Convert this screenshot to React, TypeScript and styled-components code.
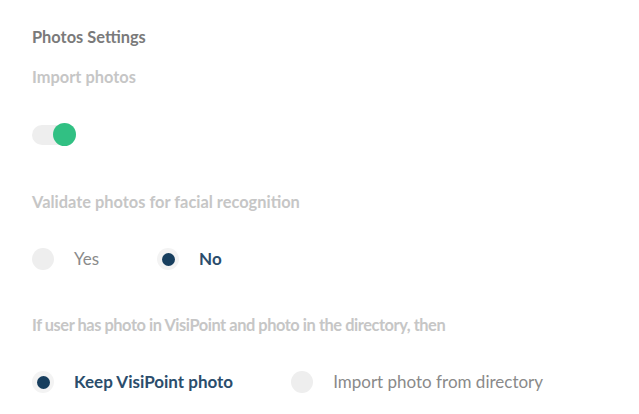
import { useState } from 'react'
import styled, { createGlobalStyle } from 'styled-components'

const GlobalStyle = createGlobalStyle`
  body {
    margin: 0;
    background: #ffffff;
    font-family: Lato, 'Open Sans', sans-serif;
  }
`

export default function App() {
  const [importPhotos, setImportPhotos] = useState(true)
  const [validate, setValidate] = useState('no')
  const [keep, setKeep] = useState('keep')

  return (
    <>
      <GlobalStyle />
      <Page>
        <Title>Photos Settings</Title>
        <Section>
          <Label>Import photos</Label>
          <Toggle $on={importPhotos} onClick={() => setImportPhotos(!importPhotos)}>
            <Knob $on={importPhotos} />
          </Toggle>
        </Section>

        <Section>
          <Label>Validate photos for facial recognition</Label>
          <RadioRow>
            <RadioOption onClick={() => setValidate('yes')}>
              <RadioCircle $checked={validate === 'yes'} />
              <RadioText $checked={validate === 'yes'}>Yes</RadioText>
            </RadioOption>
            <RadioOption onClick={() => setValidate('no')}>
              <RadioCircle $checked={validate === 'no'} />
              <RadioText $checked={validate === 'no'}>No</RadioText>
            </RadioOption>
          </RadioRow>
        </Section>

        <Section>
          <Label $tight>
            If user has photo in VisiPoint and photo in the directory, then
          </Label>
          <RadioRow>
            <RadioOption onClick={() => setKeep('keep')}>
              <RadioCircle $checked={keep === 'keep'} />
              <RadioText $checked={keep === 'keep'}>Keep VisiPoint photo</RadioText>
            </RadioOption>
            <RadioOption onClick={() => setKeep('import')}>
              <RadioCircle $checked={keep === 'import'} />
              <RadioText $checked={keep === 'import'}>
                Import photo from directory
              </RadioText>
            </RadioOption>
          </RadioRow>
        </Section>
      </Page>
    </>
  )
}

const Page = styled.div`
  display: flex;
  flex-direction: column;
  gap: 20px;
  padding: 27px 32px 0 32px;
`

const Title = styled.h2`
  margin: 0;
  font-size: 16.4px;
  line-height: 20px;
  font-weight: 700;
  color: #7a7a7a;
`

const Section = styled.div`
  display: flex;
  flex-direction: column;
  align-items: flex-start;
  gap: 36px;
  margin-bottom: 25px;
`

const Label = styled.div<{ $tight?: boolean }>`
  font-size: 16.4px;
  line-height: 20px;
  font-weight: 700;
  letter-spacing: ${(p) => (p.$tight ? '-0.45px' : '0')};
  color: #c6c6c6;
  white-space: nowrap;
`

const Toggle = styled.div<{ $on: boolean }>`
  position: relative;
  width: 40px;
  height: 20px;
  margin: 2px 0;
  border-radius: 10px;
  background: #eeeeee;
  cursor: pointer;
`

const Knob = styled.div<{ $on: boolean }>`
  position: absolute;
  top: -2px;
  left: ${(p) => (p.$on ? '21px' : '-2px')};
  width: 23px;
  height: 23px;
  border-radius: 50%;
  background: ${(p) => (p.$on ? '#31c083' : '#dddddd')};
`

const RadioRow = styled.div`
  display: flex;
  align-items: center;
  gap: 58px;
`

const RadioOption = styled.label`
  display: flex;
  align-items: center;
  gap: 20px;
  cursor: pointer;
`

const RadioCircle = styled.span<{ $checked: boolean }>`
  display: flex;
  align-items: center;
  justify-content: center;
  width: 22px;
  height: 22px;
  border-radius: 50%;
  background: ${(p) => (p.$checked ? '#f3f3f3' : '#eeeeee')};

  &::after {
    content: '';
    display: ${(p) => (p.$checked ? 'block' : 'none')};
    width: 13px;
    height: 13px;
    border-radius: 50%;
    background: #173e5e;
  }
`

const RadioText = styled.span<{ $checked: boolean }>`
  font-size: 17px;
  line-height: 20px;
  font-weight: ${(p) => (p.$checked ? 700 : 400)};
  color: ${(p) => (p.$checked ? '#2b4d6c' : '#8a8a8a')};
`
